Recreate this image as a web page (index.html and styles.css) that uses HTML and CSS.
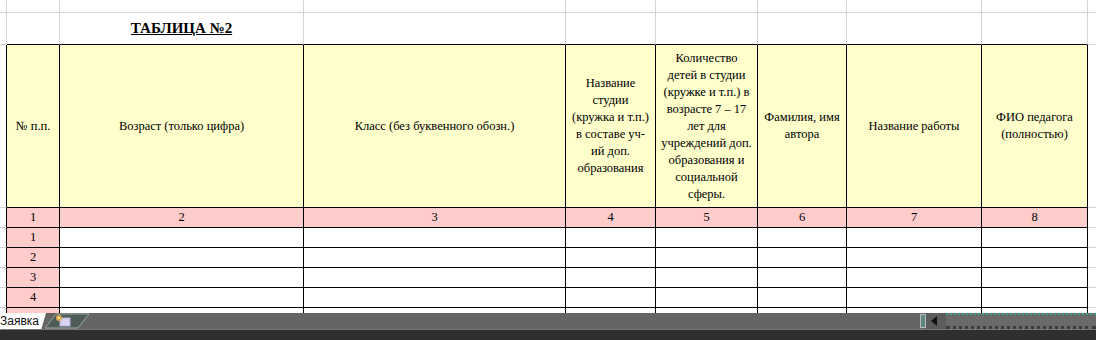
FILE: index.html
```html
<!DOCTYPE html>
<html lang="ru">
<head>
<meta charset="utf-8">
<title>Заявка</title>
<link rel="stylesheet" href="styles.css">
</head>
<body>
<div class="window">
  <div class="sheet">
    <!-- row 1 -->
    <div class="c"></div><div class="c"></div><div class="c"></div><div class="c"></div><div class="c"></div>
    <div class="c"></div><div class="c"></div><div class="c"></div><div class="c"></div><div class="c last"></div>
    <!-- row 2 -->
    <div class="c"></div>
    <div class="c top"></div>
    <div class="c top title"><span>ТАБЛИЦА №2</span></div>
    <div class="c top"></div><div class="c top"></div><div class="c top"></div>
    <div class="c top"></div><div class="c top"></div><div class="c top"></div>
    <div class="c last"></div>
    <!-- header -->
    <div class="c edge"></div>
    <div class="c t head">№ п.п.</div>
    <div class="c t head">Возраст (только цифра)</div>
    <div class="c t head">Класс (без буквенного обозн.)</div>
    <div class="c t head">Название<br>студии<br>(кружка и т.п.)<br>в составе уч-<br>ий доп.<br>образования</div>
    <div class="c t head">Количество<br>детей в студии<br>(кружке и т.п.) в<br>возрасте 7 – 17<br>лет для<br>учреждений доп.<br>образования и<br>социальной<br>сферы.</div>
    <div class="c t head">Фамилия, имя<br>автора</div>
    <div class="c t head">Название работы</div>
    <div class="c t head">ФИО педагога<br>(полностью)</div>
    <div class="c last"></div>
    <!-- numbering row -->
    <div class="c edge"></div>
    <div class="c t pink">1</div><div class="c t pink">2</div><div class="c t pink">3</div><div class="c t pink">4</div>
    <div class="c t pink">5</div><div class="c t pink">6</div><div class="c t pink">7</div><div class="c t pink">8</div>
    <div class="c last"></div>
    <!-- data rows -->
    <div class="c edge"></div><div class="c t pink">1</div>
    <div class="c t"></div><div class="c t"></div><div class="c t"></div><div class="c t"></div><div class="c t"></div><div class="c t"></div><div class="c t"></div>
    <div class="c last"></div>
    <div class="c edge"></div><div class="c t pink">2</div>
    <div class="c t"></div><div class="c t"></div><div class="c t"></div><div class="c t"></div><div class="c t"></div><div class="c t"></div><div class="c t"></div>
    <div class="c last"></div>
    <div class="c edge"></div><div class="c t pink">3</div>
    <div class="c t"></div><div class="c t"></div><div class="c t"></div><div class="c t"></div><div class="c t"></div><div class="c t"></div><div class="c t"></div>
    <div class="c last"></div>
    <div class="c edge"></div><div class="c t pink">4</div>
    <div class="c t"></div><div class="c t"></div><div class="c t"></div><div class="c t"></div><div class="c t"></div><div class="c t"></div><div class="c t"></div>
    <div class="c last"></div>
    <div class="c edge"></div><div class="c t pink"></div>
    <div class="c t"></div><div class="c t"></div><div class="c t"></div><div class="c t"></div><div class="c t"></div><div class="c t"></div><div class="c t"></div>
    <div class="c last"></div>
  </div>

  <div class="statusbar">
    <div class="tabs">
      <div class="tab">Заявка</div>
      <svg class="newtab" width="46" height="16" viewBox="0 0 46 16">
        <polygon points="1,15 12,1 45,1 34,15" fill="#4f5d58" stroke="#9aa7a2" stroke-width="1"/>
        <rect x="16" y="5" width="10" height="8" fill="#d8d4f2" stroke="#b7b2dc" stroke-width="1"/>
        <circle cx="15" cy="5" r="3" fill="#e7a64a"/>
        <circle cx="15" cy="5" r="1.2" fill="#fbe2a6"/>
      </svg>
    </div>
    <div class="scroll">
      <div class="thumb"></div>
      <div class="arrow"></div>
      <div class="track"></div>
    </div>
  </div>
</div>
</body>
</html>
```

FILE: styles.css
```css
* { box-sizing: border-box; }

html, body {
  margin: 0;
  padding: 0;
  background: #ffffff;
}

.window {
  width: 1096px;
  height: 340px;
  overflow: hidden;
  display: flex;
  flex-direction: column;
}

.sheet {
  height: 313px;
  overflow: hidden;
  display: grid;
  grid-template-columns: 7px 53px 244px 262px 90px 102px 89px 135px 106px 1fr;
  grid-template-rows: 13px 32px 163px 20px repeat(5, 20px);
  font-family: "Liberation Serif", "Times New Roman", serif;
  font-size: 12.5px;
  color: #000;
}

.c {
  border-right: 1px solid #d4d4d4;
  border-bottom: 1px solid #d4d4d4;
  display: flex;
  align-items: center;
  justify-content: center;
  text-align: center;
  line-height: 17px;
}

.c.last { border-right: none; }

.c.top { border-bottom-color: #000; }

.c.edge { border-right-color: #000; }

.c.t {
  border-right-color: #000;
  border-bottom-color: #000;
}

.head { background: #ffffcc; }

.pink { background: #ffcccc; }

.title span {
  font-weight: bold;
  font-size: 15px;
  text-decoration: underline;
}

.statusbar {
  flex: 1;
  display: flex;
  align-items: flex-start;
  background: #2f2f2f;
}

.tabs {
  display: flex;
  align-items: flex-start;
  height: 17px;
  width: 920px;
  background: #646464;
  border-bottom: 1px dotted #8a8a8a;
}

.tab {
  height: 16px;
  width: 46px;
  padding-right: 6px;
  background: #ffffff;
  font-family: "Liberation Sans", Arial, sans-serif;
  font-size: 12px;
  line-height: 16px;
  color: #111;
  white-space: nowrap;
  clip-path: polygon(0 0, 100% 0, 90% 100%, 0 100%);
}

.newtab {
  margin-left: -2px;
  display: block;
}

.scroll {
  flex: 1;
  display: flex;
  height: 17px;
  background: #646464;
  border-bottom: 1px dotted #8a8a8a;
}

.thumb {
  width: 6px;
  height: 14px;
  margin-top: 1px;
  border: 1px solid #b8b8b8;
  background: #5f8784;
}

.arrow {
  width: 20px;
  height: 16px;
  display: flex;
  align-items: center;
  padding-left: 5px;
  background: #5c5c5c;
}

.arrow::before {
  content: "";
  display: block;
  border-top: 5px solid transparent;
  border-bottom: 5px solid transparent;
  border-right: 6px solid #111;
}

.track {
  flex: 1;
  height: 16px;
  background: #6a6a6a;
  border-top: 2px dotted #3a9e86;
  border-bottom: 3px dotted #3c3c3c;
}
```
